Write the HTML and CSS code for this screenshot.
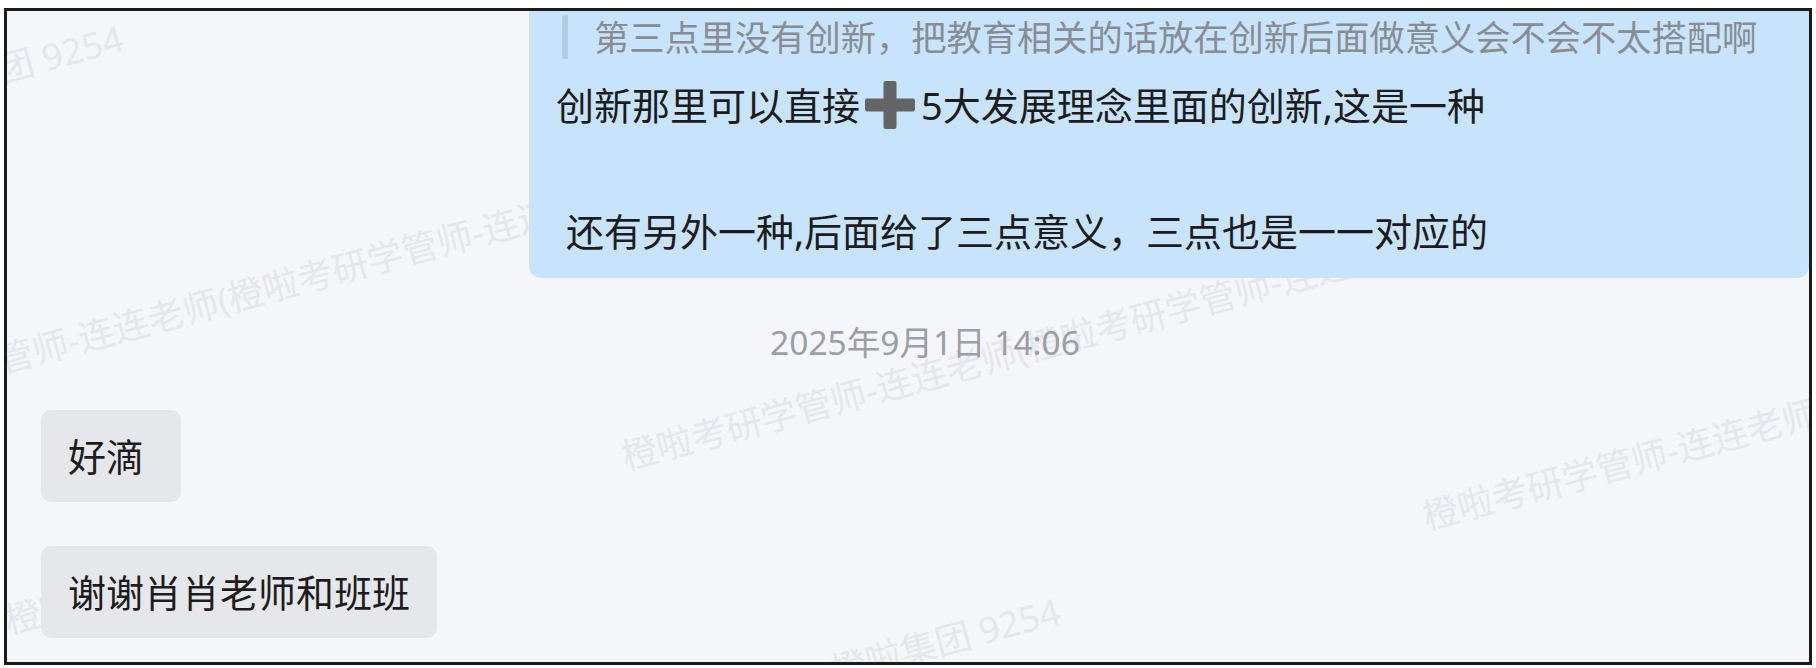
FILE: index.html
```html
<!DOCTYPE html>
<html lang="zh-CN">
<head>
<meta charset="utf-8">
<title>会话</title>
<link rel="stylesheet" href="styles.css">
</head>
<body>
<div class="frame">
  <div class="watermark" aria-hidden="true">
    <span class="wm wm-1">橙啦集团 9254</span>
    <span class="wm wm-2">橙啦考研学管师-连连老师(橙啦考研学管师-连连老师)</span>
    <span class="wm wm-3">橙啦集团 9254</span>
    <span class="wm wm-4">橙啦考研学管师-连连老师(橙啦考研学管师-连连老师)</span>
    <span class="wm wm-5">橙啦集团 9254</span>
    <span class="wm wm-6">橙啦考研学管师-连连老师(橙啦考研学管师-连连老师)</span>
  </div>
  <div class="thread">
    <div class="bubble bubble-out">
      <div class="quote">第三点里没有创新，把教育相关的话放在创新后面做意义会不会不太搭配啊</div>
      <div class="text">创新那里可以直接<svg class="plus" viewBox="0 0 50 48"><rect x="0" y="17.5" width="50" height="13" rx="2"/><rect x="18.5" y="0" width="13" height="48" rx="2"/></svg>5大发展理念里面的创新,这是一种

 还有另外一种,后面给了三点意义，三点也是一一对应的</div>
    </div>
    <div class="time">2025年9月1日 14:06</div>
    <div class="bubble bubble-in">好滴&nbsp;</div>
    <div class="bubble bubble-in">谢谢肖肖老师和班班</div>
  </div>
</div>
</body>
</html>
```
FILE: styles.css
```css
html, body {
  margin: 0;
  background: #ffffff;
}

body {
  width: 1816px;
  height: 668px;
  overflow: hidden;
  font-family: "Noto Sans", "Noto Sans CJK SC", sans-serif;
}

/* chat window with its dark outline */
.frame {
  position: relative;
  margin: 8px 0 0 4px;
  width: 1802px;
  height: 651px;
  border: 3px solid #1b1b1b;
  background: #f5f6fa;
  overflow: hidden;
}

/* faint tiled account watermark behind the messages */
.watermark {
  position: absolute;
  inset: 0;
  z-index: 0;
  pointer-events: none;
}

.wm {
  position: absolute;
  font-size: 36px;
  line-height: 36px;
  color: #e5e7ec;
  white-space: nowrap;
  transform-origin: 0 100%;
  transform: rotate(-15deg);
}

.wm-1 { left: -108px; top: 69px; }
.wm-2 { left: -178px; top: 378px; }
.wm-3 { left: 3px; top: 592px; }
.wm-4 { left: 620px; top: 428px; }
.wm-5 { left: 829px; top: 642px; }
.wm-6 { left: 1421px; top: 488px; }

/* message list */
.thread {
  position: relative;
  z-index: 1;
  display: flex;
  flex-direction: column;
  align-items: flex-start;
  padding-left: 34px;
}

.bubble {
  color: #1c1c1c;
  font-size: 38px;
}

.bubble-out {
  align-self: stretch;
  margin: -16px 0 0 488px;
  padding: 20px 28px 15px 27px;
  background: #c8e4fc;
  border-radius: 12px;
}

.quote {
  margin-left: 6px;
  padding-left: 26px;
  border-left: 6px solid #b3cbe0;
  border-radius: 3px;
  font-size: 35.25px;
  line-height: 44px;
  color: #898d93;
  white-space: nowrap;
}

.text {
  margin-top: 15px;
  line-height: 63px;
  white-space: pre-wrap;
}

.plus {
  width: 50px;
  height: 48px;
  margin: 0 6px 0 5px;
  vertical-align: -9px;
  fill: #646464;
}

.time {
  align-self: stretch;
  margin-top: 40px;
  text-align: center;
  font-size: 33.5px;
  line-height: 48px;
  color: #9a9ea5;
}

.bubble-in {
  margin-top: 44px;
  padding: 17px 27px;
  line-height: 58px;
  background: #e5e7eb;
  border-radius: 10px;
}
```
